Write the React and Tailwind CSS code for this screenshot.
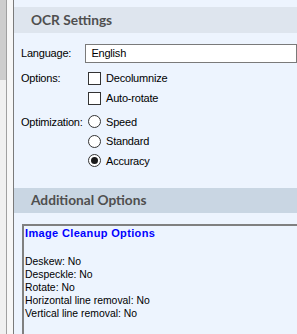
import React, { useState } from 'react';

const ui = { fontFamily: '"Liberation Sans", Arial, sans-serif' };
const heading = { fontFamily: 'Lato, "Open Sans", sans-serif' };
const classic = { fontFamily: '"Liberation Sans", Arial, sans-serif' };

function Check({ label, checked, onChange }) {
  return (
    <label className="flex items-center h-[20px] cursor-default" onClick={onChange}>
      <span className="w-[13px] h-[13px] border border-[#333] bg-white flex items-center justify-center">
        {checked && <span className="text-[10px] leading-none">✓</span>}
      </span>
      <span className="ml-[5px]">{label}</span>
    </label>
  );
}

function Radio({ label, selected, onSelect }) {
  return (
    <label className="flex items-center h-[19.5px] cursor-default" onClick={onSelect}>
      <span className="w-[13px] h-[13px] rounded-full border border-[#333] bg-white flex items-center justify-center">
        {selected && <span className="w-[7px] h-[7px] rounded-full bg-[#1a1a1a]" />}
      </span>
      <span className="ml-[5px]">{label}</span>
    </label>
  );
}

export default function App() {
  const [decolumnize, setDecolumnize] = useState(false);
  const [autoRotate, setAutoRotate] = useState(false);
  const [mode, setMode] = useState('Accuracy');

  const cleanup = [
    ['Deskew', 'No'],
    ['Despeckle', 'No'],
    ['Rotate', 'No'],
    ['Horizontal line removal', 'No'],
    ['Vertical line removal', 'No'],
  ];

  return (
    <div className="flex w-[297px] h-[334px] overflow-hidden bg-[#f0f0f0]" style={ui}>
      {/* scroll gutter */}
      <div className="flex w-[14px] shrink-0">
        <div className="w-[6px] flex flex-col">
          <div className="h-[80px] bg-[#cdcdcd]" />
          <div className="flex-1 bg-[#f0f0f0]" />
        </div>
        <div className="w-[1px] bg-[#a0a0a0]" />
        <div className="w-[6px] bg-[#f7f7f7]" />
        <div className="w-[1px] bg-[#7a7a7a]" />
      </div>

      <div className="flex-1 flex flex-col bg-[#edf4fe] text-[11px] tracking-[-0.2px] text-black min-w-0">
        <div className="h-[7px]" />
        <div className="h-[26px] bg-[#dee5ee] flex items-center pl-[17px] text-[13.7px] tracking-normal font-bold text-[#4f4f4f]" style={heading}>
          OCR Settings
        </div>

        <div className="pl-[7px] pt-[11px]">
          <div className="flex items-center">
            <span className="w-[67px]">Language:</span>
            <div className="w-[220px] h-[19px] border border-[#7a7a7a] bg-white flex items-center pl-[5px]">
              English
            </div>
          </div>

          <div className="flex mt-[5px]">
            <span className="w-[67px] h-[20px] flex items-center">Options:</span>
            <div className="flex flex-col">
              <Check label="Decolumnize" checked={decolumnize} onChange={() => setDecolumnize(!decolumnize)} />
              <Check label="Auto-rotate" checked={autoRotate} onChange={() => setAutoRotate(!autoRotate)} />
            </div>
          </div>

          <div className="flex mt-[4px]">
            <span className="w-[67px] h-[19.5px] flex items-center">Optimization:</span>
            <div className="flex flex-col">
              {['Speed', 'Standard', 'Accuracy'].map((m) => (
                <Radio key={m} label={m} selected={mode === m} onSelect={() => setMode(m)} />
              ))}
            </div>
          </div>
        </div>

        <div className="h-[25px] mt-[17px] bg-[#c9d6e3] flex items-center pl-[17px] text-[13.7px] tracking-normal font-bold text-[#4f4f4f]" style={heading}>
          Additional Options
        </div>

        <div className="ml-[8px] mt-[11px] flex-1 border-t-2 border-l-2 border-t-[#808080] border-l-[#808080] bg-[#edf4fe] pl-[1px] pt-[1px] text-[10.4px] tracking-normal leading-[13px]" style={classic}>
          <div className="font-bold text-[11px] tracking-[0.35px] text-[#0000ff]">Image Cleanup Options</div>
          <div className="h-[15px]" />
          {cleanup.map(([k, v]) => (
            <div key={k}>{k}: {v}</div>
          ))}
        </div>
      </div>
    </div>
  );
}
